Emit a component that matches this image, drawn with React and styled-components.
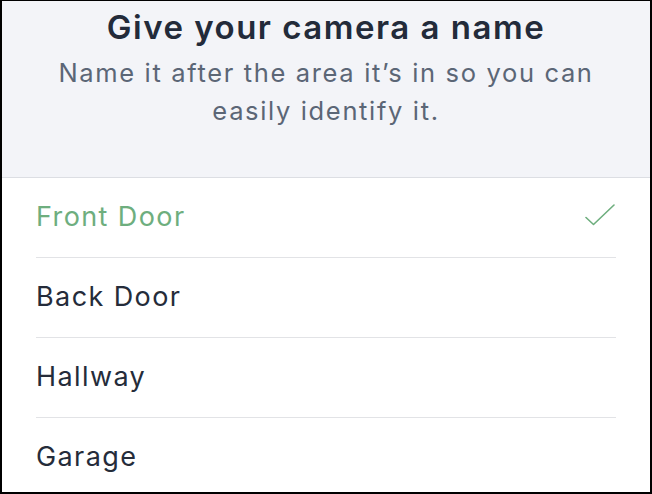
import React from 'react';
import styled, { createGlobalStyle } from 'styled-components';

const GlobalStyle = createGlobalStyle`
  html, body {
    margin: 0;
    padding: 0;
    background: #ffffff;
  }
  * {
    box-sizing: border-box;
  }
`;

const Frame = styled.div`
  width: 652px;
  height: 494px;
  border: 2px solid #000;
  border-top-width: 1px;
  background: #fff;
  overflow: hidden;
  font-family: Inter, "Liberation Sans", sans-serif;
`;

const Header = styled.header`
  height: 177px;
  background: #f3f4f8;
  border-bottom: 1px solid #dcdee3;
  text-align: center;
  padding-top: 6px;
`;

const Title = styled.h1`
  margin: 0;
  font-size: 33px;
  line-height: 40px;
  font-weight: 600;
  letter-spacing: 1.5px;
  color: #232b3a;
`;

const Subtitle = styled.p`
  margin: 7px auto 0;
  width: 590px;
  font-size: 25.5px;
  line-height: 38px;
  font-weight: 400;
  letter-spacing: 1.65px;
  color: #5b6676;
`;

const List = styled.ul`
  list-style: none;
  margin: 0;
  padding: 0 34px;
`;

const Row = styled.li`
  height: 80px;
  display: flex;
  align-items: center;
  justify-content: space-between;
  padding-bottom: 3px;
  border-bottom: ${p => (p.$last ? 'none' : '1px solid #e2e3e6')};
  font-size: 27px;
  letter-spacing: 1.4px;
  color: ${p => (p.$selected ? '#6eae7e' : '#252c3a')};
`;

const Check = () => (
  <svg width="32" height="24" viewBox="0 0 32 24" fill="none">
    <path d="M2 13.5 L9.5 20.5 L30 1" stroke="#6eae7e" strokeWidth="1.6" strokeLinecap="round" strokeLinejoin="round" />
  </svg>
);

const names = ['Front Door', 'Back Door', 'Hallway', 'Garage'];

export default function App() {
  const selected = 'Front Door';
  return (
    <>
      <GlobalStyle />
      <Frame>
        <Header>
          <Title>Give your camera a name</Title>
          <Subtitle>Name it after the area it’s in so you can easily identify it.</Subtitle>
        </Header>
        <List>
          {names.map((n, i) => (
            <Row key={n} $selected={n === selected} $last={i === names.length - 1}>
              <span>{n}</span>
              {n === selected && <Check />}
            </Row>
          ))}
        </List>
      </Frame>
    </>
  );
}
